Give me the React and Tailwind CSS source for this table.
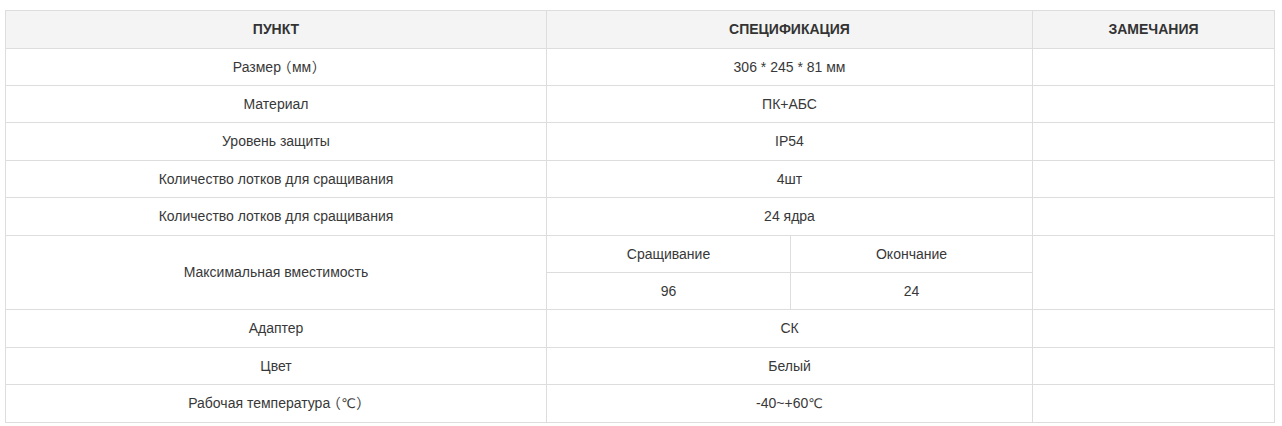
function T({ s }) {
  const parts = s.split(/(（|）|℃)/);
  return parts.map((p, i) => {
    if (p === "（") return <span key={i} className="ml-[3px] mr-[1px]">{p}</span>;
    if (p === "）") return <span key={i} className="ml-[1px]">{p}</span>;
    if (p === "℃") return <span key={i} className="font-['DejaVu_Sans'] text-[13px]">{p}</span>;
    return p;
  });
}

export default function App() {
  const c = "border border-[#dddddd] text-center align-middle";
  const rows = [
    ["Размер（мм）", "306 * 245 * 81 мм", 37],
    ["Материал", "ПК+АБС", 37],
    ["Уровень защиты", "IP54", 38],
    ["Количество лотков для сращивания", "4шт", 37],
    ["Количество лотков для сращивания", "24 ядра", 38],
  ];
  const rows2 = [
    ["Адаптер", "СК", 38],
    ["Цвет", "Белый", 37],
    ["Рабочая температура（℃）", "-40~+60℃", 38],
  ];
  return (
    <div className="bg-white w-[1282px] h-[426px] pl-[5px] pt-[10px]" style={{ fontFamily: '"Liberation Sans", Arial, "Noto Sans CJK SC", sans-serif' }}>
      <table className="table-fixed border-collapse w-[1269px] text-[14px] text-[#383838] [font-feature-settings:'palt']">
        <colgroup>
          <col className="w-[541px]" />
          <col className="w-[244px]" />
          <col className="w-[242px]" />
          <col className="w-[242px]" />
        </colgroup>
        <thead>
          <tr className="h-[38px] bg-[#f4f4f4]">
            <th className={`${c} text-[14px] font-bold text-[#333333]`}>ПУНКТ</th>
            <th className={`${c} text-[14px] font-bold text-[#333333]`} colSpan={2}>СПЕЦИФИКАЦИЯ</th>
            <th className={`${c} text-[14px] font-bold text-[#333333]`}>ЗАМЕЧАНИЯ</th>
          </tr>
        </thead>
        <tbody>
          {rows.map((r, i) => (
            <tr key={i} style={{ height: r[2] }}>
              <td className={c}><T s={r[0]} /></td>
              <td className={c} colSpan={2}><T s={r[1]} /></td>
              <td className={c}></td>
            </tr>
          ))}
          <tr className="h-[37px]">
            <td className={c} rowSpan={2}>Максимальная вместимость</td>
            <td className={c}>Сращивание</td>
            <td className={c}>Окончание</td>
            <td className={c} rowSpan={2}></td>
          </tr>
          <tr className="h-[37px]">
            <td className={c}>96</td>
            <td className={c}>24</td>
          </tr>
          {rows2.map((r, i) => (
            <tr key={i} style={{ height: r[2] }}>
              <td className={c}><T s={r[0]} /></td>
              <td className={c} colSpan={2}><T s={r[1]} /></td>
              <td className={c}></td>
            </tr>
          ))}
        </tbody>
      </table>
    </div>
  );
}
